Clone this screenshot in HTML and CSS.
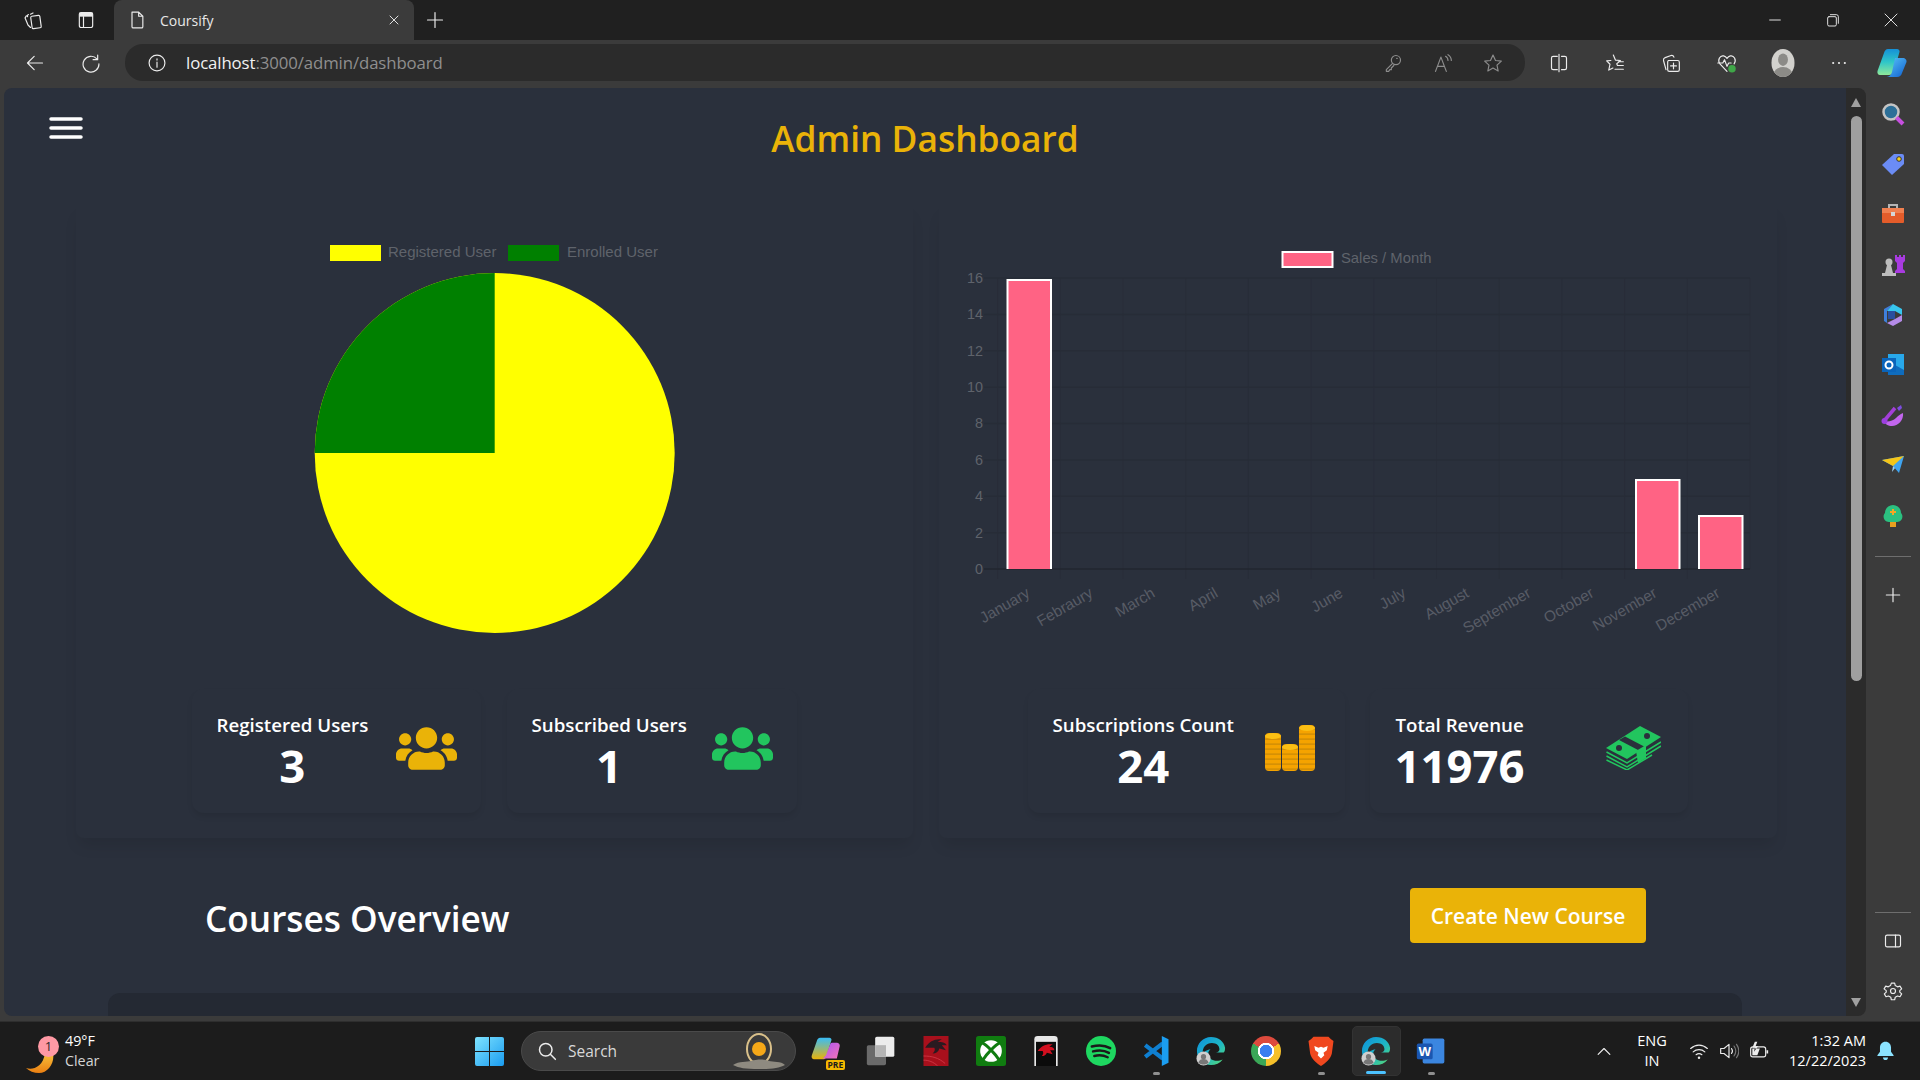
FILE: index.html
```html
<!DOCTYPE html>
<html lang="en">
<head>
  <meta charset="UTF-8" />
  <title>Coursify</title>
  <link rel="stylesheet" href="styles.css">
</head>
<body>
<svg class="svg-defs" aria-hidden="true">
  <defs>
    <linearGradient id="edgeGrad" x1="0" y1="0" x2="1" y2="1"><stop offset="0" stop-color="#0c8fdc"/><stop offset=".55" stop-color="#1fb8c4"/><stop offset="1" stop-color="#5fdc6a"/></linearGradient>
    <linearGradient id="copilotA" x1="0" y1="0" x2="0" y2="1"><stop offset="0" stop-color="#1590d8"/><stop offset=".5" stop-color="#2fc6c8"/><stop offset="1" stop-color="#8fe89a"/></linearGradient>
    <linearGradient id="copilotB" x1="0" y1="0" x2="1" y2="1"><stop offset="0" stop-color="#5cc8fa"/><stop offset="1" stop-color="#0f5fd0"/></linearGradient>
    <linearGradient id="preA" x1="0" y1="0" x2="0" y2="1"><stop offset="0" stop-color="#38bdf8"/><stop offset="1" stop-color="#eab308"/></linearGradient>
    <linearGradient id="preB" x1="0" y1="0" x2="1" y2="1"><stop offset="0" stop-color="#a855f7"/><stop offset="1" stop-color="#f472b6"/></linearGradient>
    <linearGradient id="moonGrad" x1="0" y1="0" x2="0" y2="1"><stop offset="0" stop-color="#f9c23c"/><stop offset="1" stop-color="#ea7f12"/></linearGradient>
    <linearGradient id="winGrad" x1="0" y1="0" x2="1" y2="1"><stop offset="0" stop-color="#7fe3ff"/><stop offset="1" stop-color="#1a9cf0"/></linearGradient>
    <pattern id="coinStripes" width="6" height="5" patternUnits="userSpaceOnUse"><rect width="6" height="5" fill="#f5a300"/><rect y="3.5" width="6" height="1.2" fill="#c98a06"/></pattern>
    <symbol id="edgeIcon" viewBox="0 0 32 32">
      <path fill="url(#edgeGrad)" d="M16 1C7.5 1 1 8 1 16c0 8.500 6.500 15 15 15 5 0 9.500-2.200 12.500-6-6 3-15.500 1.500-15.500-6 0-2 1-3.500 2.500-4.500-4 0-7.500 2.500-8.500 6C6.500 11.500 11 7.500 17 7.500c5 0 8 3 8 6.500 0 2-1.500 3.500-4 3.500h8.500C31 16.500 31 14 31 12.500 30 6 24 1 16 1z"/>
      <circle cx="8" cy="24" r="7.500" fill="#cfcfcf"/><circle cx="8" cy="22" r="2.800" fill="#777"/><path fill="#777" d="M2.500 28.500c1-3 3-4 5.500-4s4.500 1 5.500 4c-3 2.500-8 2.500-11 0z"/>
    </symbol>
  </defs>
</svg>

<div class="app">
  <!-- browser tab strip -->
  <div class="tabstrip">
    <div class="strip-cell"><svg class="ico" viewBox="0 0 24 24"><rect x="10" y="7" width="11" height="15" rx="1.500" transform="rotate(-8 15 14)"/><path d="M9 5 12 3.500M5.500 8c-.500-1 0-2 1-2.500M4 7 2.500 9.500 6 18l3 3"/></svg></div>
    <div class="strip-cell"><svg class="ico" viewBox="0 0 24 24"><rect x="4" y="3" width="16" height="18" rx="2.500"/><rect class="ico-solid" x="4" y="3" width="16" height="5"/><path d="M9 8v13"/></svg></div>
    <div class="tab">
      <svg class="ico tab-file" viewBox="0 0 24 24"><path d="M6 2.500h8l5 5V20a1.500 1.500 0 0 1-1.500 1.500h-10A1.500 1.500 0 0 1 6 20zM14 2.500v5h5"/></svg>
      <span class="tab-title">Coursify</span>
      <svg class="ico tab-close" viewBox="0 0 24 24"><path d="M6 6l12 12M18 6 6 18"/></svg>
    </div>
    <div class="strip-plus"><svg class="ico" viewBox="0 0 24 24"><path d="M12 3v18M3 12h18"/></svg></div>
    <div class="window-controls">
      <div class="window-btn"><svg class="ico small" viewBox="0 0 24 24"><path d="M4 12h16"/></svg></div>
      <div class="window-btn"><svg class="ico small" viewBox="0 0 24 24"><rect x="4" y="7" width="13" height="14" rx="2"/><path d="M8 4h9a3 3 0 0 1 3 3v10"/></svg></div>
      <div class="window-btn"><svg class="ico small" viewBox="0 0 24 24"><path d="M3 3l18 18M21 3 3 21"/></svg></div>
    </div>
  </div>

  <!-- browser toolbar -->
  <div class="toolbar">
    <div class="tool-cell first"><svg class="ico" viewBox="0 0 24 24"><path d="M21 12H3M11 4l-8 8 8 8"/></svg></div>
    <div class="tool-cell"><svg class="ico" viewBox="0 0 24 24"><path d="M19 7a9.500 9.500 0 1 0 2.500 6M20 2.500V8h-5.500"/></svg></div>
    <div class="address">
      <svg class="ico address-info" viewBox="0 0 24 24"><circle cx="12" cy="12" r="9.500"/><path d="M12 11v6M12 7v1.500"/></svg>
      <span class="url"><b>localhost</b>:3000/admin/dashboard</span>
      <div class="address-actions">
        <div class="address-cell"><svg class="ico dim" viewBox="0 0 24 24"><circle cx="15.500" cy="8.500" r="5.500"/><path d="M11.500 12.500 4 20v2h3l1-2h2v-2l3-3M16.500 6.500h.5"/></svg></div>
        <div class="address-cell"><svg class="ico dim" viewBox="0 0 24 24"><path d="M3 22 9.500 5 16 22M5.500 16h8M15 4c2 1 3 3 3 5M18 2c2.500 1.500 4 4 4 7"/></svg></div>
        <div class="address-cell"><svg class="ico dim" viewBox="0 0 24 24"><path d="M12 2.500l3 6.500 7 .800-5.200 4.800 1.400 7L12 18l-6.200 3.600 1.400-7L2 9.800 9 9z"/></svg></div>
      </div>
    </div>
    <div class="tool-cell gap"><svg class="ico" viewBox="0 0 24 24"><path d="M10 4H5a2 2 0 0 0-2 2v12a2 2 0 0 0 2 2h5M15 4h4a2 2 0 0 1 2 2v12a2 2 0 0 1-2 2h-4M12 1.500v21"/></svg></div>
    <div class="tool-cell"><svg class="ico" viewBox="0 0 24 24"><path d="M10 2.500l2.500 6 6 .500-4.500 4 1 2M7 9l-5 .500 4 4-1.500 7 5-2.500M16 10.500h6M15 15h7M12 19.500h10"/></svg></div>
    <div class="tool-cell"><svg class="ico" viewBox="0 0 24 24"><path d="M6 20 3 9c-.500-2 1-3 2-3.500L12 3c2-.500 3 .500 3.500 2M9 9h11a2 2 0 0 1 2 2v9a2 2 0 0 1-2 2H10a2 2 0 0 1-2-2v-9a2 2 0 0 1 1-2zM15 12v7M11.500 15.500h7"/></svg></div>
    <div class="tool-cell"><svg class="ico" viewBox="0 0 24 24"><path d="M12 22 3.500 13C0 8 4 2.500 8 3.500c2 .500 3 1.500 4 3 1-1.500 2-2.500 4-3 4-1 8 4.500 4.500 9.500M1 12h6l2-4 3 8 2-4h3"/><circle class="health-dot" cx="18" cy="19" r="4.500"/></svg></div>
    <div class="tool-cell"><svg class="avatar" viewBox="0 0 28 34"><defs><clipPath id="avatarClip"><ellipse cx="14" cy="17" rx="14" ry="17"/></clipPath></defs><ellipse cx="14" cy="17" rx="14" ry="17" fill="#d2d1cd"/><g clip-path="url(#avatarClip)" fill="#8c8b87"><ellipse cx="14" cy="13" rx="6" ry="7.500"/><ellipse cx="14" cy="32" rx="12" ry="10"/></g></svg></div>
    <div class="tool-cell"><svg class="ico" viewBox="0 0 24 24"><circle class="ico-fill" cx="5" cy="12" r="1.300"/><circle class="ico-fill" cx="12" cy="12" r="1.300"/><circle class="ico-fill" cx="19" cy="12" r="1.300"/></svg></div>
    <div class="tool-cell last"><svg class="copilot" viewBox="0 0 30 30"><path fill="url(#copilotA)" d="M11 1h9c2 0 3 2 2.500 3L17 23c-.500 2-3 4-5 4H3c-2 0-3-2-2.500-4L7 5c.500-2 2-4 4-4z"/><path fill="url(#copilotB)" d="M18 10h8c2 0 4 2 3.500 4L25 25c-.500 2-2 4-5 4H9c2 0 5-1 6-5l3-14z"/></svg></div>
  </div>

  <div class="browser-body">
    <!-- the page itself -->
    <main class="viewport">
      <svg class="menu-toggle" viewBox="0 0 34 22"><path d="M2 2h30M2 11h30M2 20h30"/></svg>
      <h1 class="page-title">Admin Dashboard</h1>

      <div class="stats-grid">
        <section class="panel">
          <svg class="chart" viewBox="0 0 837 484">
            <rect class="swatch-yellow" x="254" y="40" width="51" height="16"/>
            <text class="chart-text legend" x="312" y="52">Registered User</text>
            <rect class="swatch-green" x="432" y="40" width="51" height="16"/>
            <text class="chart-text legend" x="491" y="52">Enrolled User</text>
            <circle class="swatch-yellow" cx="418.700" cy="248" r="180"/>
            <path class="swatch-green" d="M418.700 248V68A180 180 0 0 0 238.700 248z"/>
          </svg>
          <div class="cards">
            <div class="card">
              <div class="card-text"><h3>Registered Users</h3><p>3</p></div>
              <svg class="users-icon yellow" viewBox="0 32 640 448"><path d="M96 224c35.300 0 64-28.700 64-64s-28.700-64-64-64-64 28.700-64 64 28.700 64 64 64zm448 0c35.300 0 64-28.700 64-64s-28.700-64-64-64-64 28.700-64 64 28.700 64 64 64zm32 32h-64c-17.600 0-33.500 7.100-45.100 18.600 40.300 22.100 68.900 62 75.100 109.400h66c17.700 0 32-14.300 32-32v-32c0-35.300-28.700-64-64-64zm-256 0c61.900 0 112-50.100 112-112S381.900 32 320 32 208 82.100 208 144s50.100 112 112 112zm76.800 32h-8.300c-20.800 10-43.900 16-68.500 16s-47.600-6-68.500-16h-8.300C179.600 288 128 339.600 128 403.200V432c0 26.500 21.500 48 48 48h288c26.500 0 48-21.500 48-48v-28.800c0-63.600-51.600-115.200-115.200-115.200zm-223.700-13.400C161.500 263.100 145.600 256 128 256H64c-35.300 0-64 28.700-64 64v32c0 17.700 14.300 32 32 32h65.900c6.300-47.400 34.900-87.300 75.200-109.400z"/></svg>
            </div>
            <div class="card">
              <div class="card-text"><h3>Subscribed Users</h3><p>1</p></div>
              <svg class="users-icon green" viewBox="0 32 640 448"><path d="M96 224c35.300 0 64-28.700 64-64s-28.700-64-64-64-64 28.700-64 64 28.700 64 64 64zm448 0c35.300 0 64-28.700 64-64s-28.700-64-64-64-64 28.700-64 64 28.700 64 64 64zm32 32h-64c-17.600 0-33.500 7.100-45.100 18.600 40.300 22.100 68.900 62 75.100 109.400h66c17.700 0 32-14.300 32-32v-32c0-35.300-28.700-64-64-64zm-256 0c61.900 0 112-50.100 112-112S381.900 32 320 32 208 82.100 208 144s50.100 112 112 112zm76.800 32h-8.300c-20.800 10-43.900 16-68.500 16s-47.600-6-68.500-16h-8.300C179.600 288 128 339.600 128 403.200V432c0 26.500 21.500 48 48 48h288c26.500 0 48-21.500 48-48v-28.800c0-63.600-51.600-115.200-115.200-115.200zm-223.700-13.400C161.500 263.100 145.600 256 128 256H64c-35.300 0-64 28.700-64 64v32c0 17.700 14.300 32 32 32h65.900c6.300-47.400 34.900-87.300 75.200-109.400z"/></svg>
            </div>
          </div>
        </section>

        <section class="panel">
          <svg class="chart" viewBox="0 0 838 484">
            <rect class="bar" x="343.500" y="47" width="50" height="15"/>
            <text class="chart-text bar-legend" x="402" y="58">Sales / Month</text>
            <path class="grid-line" d="M58.600 73V374M121.300 73V374M184 73V374M246.700 73V374M309.400 73V374M372.100 73V374M434.800 73V374M497.500 73V374M560.200 73V374M622.900 73V374M685.600 73V374M748.300 73V374M811 73V364"/>
            <path class="grid-line strong" d="M45 73H811M45 109.400H811M45 145.800H811M45 182.200H811M45 218.500H811M45 254.900H811M45 291.300H811M45 327.700H811"/>
            <path class="grid-line zero" d="M45 364H811"/>
            <g class="chart-text bar-text ticks">
              <text x="44" y="78">16</text><text x="44" y="114">14</text><text x="44" y="151">12</text><text x="44" y="187">10</text><text x="44" y="223">8</text><text x="44" y="260">6</text><text x="44" y="296">4</text><text x="44" y="333">2</text><text x="44" y="369">0</text>
            </g>
            <path class="bar" d="M68.500 364V75H112V364"/>
            <path class="bar" d="M697 364V275H740.500V364"/>
            <path class="bar" d="M760 364V311H803.500V364"/>
            <g class="chart-text month-text">
              <text transform="rotate(-30 92 391)" x="92" y="391">January</text>
              <text transform="rotate(-30 155 391)" x="155" y="391">Febraury</text>
              <text transform="rotate(-30 217 391)" x="217" y="391">March</text>
              <text transform="rotate(-30 280 391)" x="280" y="391">April</text>
              <text transform="rotate(-30 343 391)" x="343" y="391">May</text>
              <text transform="rotate(-30 405 391)" x="405" y="391">June</text>
              <text transform="rotate(-30 468 391)" x="468" y="391">July</text>
              <text transform="rotate(-30 531 391)" x="531" y="391">August</text>
              <text transform="rotate(-30 593 391)" x="593" y="391">September</text>
              <text transform="rotate(-30 656 391)" x="656" y="391">October</text>
              <text transform="rotate(-30 719 391)" x="719" y="391">November</text>
              <text transform="rotate(-30 782 391)" x="782" y="391">December</text>
            </g>
          </svg>
          <div class="cards wide">
            <div class="card">
              <div class="card-text"><h3>Subscriptions Count</h3><p>24</p></div>
              <svg class="coins-icon" viewBox="0 0 50 46">
                <rect x="0" y="8" width="16" height="38" rx="4" fill="url(#coinStripes)"/><ellipse cx="8" cy="11" rx="8" ry="3" fill="#fbbf14"/>
                <rect x="17" y="19" width="16" height="27" rx="4" fill="url(#coinStripes)"/><ellipse cx="25" cy="22" rx="8" ry="3" fill="#fbbf14"/>
                <rect x="34" y="0" width="16" height="46" rx="4" fill="url(#coinStripes)"/><ellipse cx="42" cy="3" rx="8" ry="3" fill="#fbbf14"/>
              </svg>
            </div>
            <div class="card">
              <div class="card-text"><h3>Total Revenue</h3><p>11976</p></div>
              <svg class="money-icon" viewBox="0 0 55 44">
                <path class="money-lines" d="M.500 26 21 37 55 16M.500 30 21 41 55 20M.500 34 21 44 46 29"/>
                <path class="money-bill" d="M0 22 34 0 55 11 21 33z"/>
                <path class="money-band" d="M13 14 19 10.500 40 21.500 34 25z"/>
                <circle class="money-band" cx="13" cy="22" r="3"/><circle class="money-band" cx="41" cy="10" r="3"/>
                <path class="money-bill" d="M30 25 40 19v13L32 37z"/>
              </svg>
            </div>
          </div>
        </section>
      </div>

      <div class="courses-head">
        <h2>Courses Overview</h2>
        <button class="create-btn">Create New Course</button>
      </div>
      <div class="courses-table"></div>
    </main>

    <div class="scrollbar">
      <span class="scroll-up"></span>
      <span class="scroll-thumb"></span>
      <span class="scroll-down"></span>
    </div>

    <!-- edge sidebar -->
    <aside class="sidebar">
      <div class="side-cell"><svg class="side-ico" viewBox="0 0 24 24"><circle cx="10" cy="10" r="7.500" fill="#2c6f98" stroke="#c4c4c4" stroke-width="2.500"/><path d="M15.500 15.500 22 22" stroke="#c74fe0" stroke-width="4"/></svg></div>
      <div class="side-cell"><svg class="side-ico" viewBox="0 0 24 24"><path fill="#6b8cf5" d="M13 2h8a2 2 0 0 1 2 2v8L11 23 1 13z"/><circle cx="18" cy="7" r="2.300" fill="#f6d21f" stroke="#333"/></svg></div>
      <div class="side-cell"><svg class="side-ico" viewBox="0 0 24 24"><path d="M8 6V3h8v3" fill="none" stroke="#b5b5b5" stroke-width="2"/><path fill="#e45c2a" d="M1 6h22v14a1 1 0 0 1-1 1H2a1 1 0 0 1-1-1z"/><path fill="#f08050" d="M1 6h22v5H1z"/><rect x="10" y="10" width="4" height="4" fill="#d6d6d6"/></svg></div>
      <div class="side-cell"><svg class="side-ico" viewBox="0 0 24 24"><circle cx="8" cy="9" r="3.500" fill="#bdbdbd"/><path fill="#bdbdbd" d="M6 12h4l2 8H4zM1 20h14v3H1z"/><path fill="#a83be0" d="M14 2h2v2h2V2h2v2h2V2h2v6l-2 2v6l2 2v2H14v-2l2-2v-6l-2-2z"/></svg></div>
      <div class="side-cell"><svg class="side-ico" viewBox="0 0 24 24"><path fill="#3f7fdc" d="M12 1 3 6v12l3 2V8z"/><path fill="#37c6ee" d="M12 1l9 5v6l-7-4-8 0z"/><path fill="#b58be8" d="M21 12v6l-9 5-6-3 8-4z"/><path fill="#2a4f9e" d="M7 8h7v8H7z"/></svg></div>
      <div class="side-cell"><svg class="side-ico" viewBox="0 0 24 24"><path fill="#28a8ea" d="M7 1h16v21H7z"/><path fill="#0f6cbd" d="M14 12l9 5v5H7v-8z"/><rect x="1" y="5" width="14" height="14" fill="#0a64ba"/><circle cx="8" cy="12" r="3.500" fill="none" stroke="#fff" stroke-width="2"/></svg></div>
      <div class="side-cell"><svg class="side-ico" viewBox="0 0 24 24"><path fill="#c266ee" d="M22 10c1 7-5 13-11 13-4 0-7-2-8-5 4 1 9 0 12-3 2-2 4-4 7-5z"/><path stroke="#a33fd8" stroke-width="3.500" d="M3 18 14 5"/><circle cx="3.500" cy="18" r="3" fill="#9c3fe0"/><path fill="#7d4de0" d="M16 5l4-3 1 3-3 3z"/></svg></div>
      <div class="side-cell"><svg class="side-ico" viewBox="0 0 24 24"><path fill="#3fa4f0" d="M1 7 23 3 18 20 12 13z"/><path fill="#f5c518" d="M1 7 23 3 12 13z"/><path fill="#9ed4fa" d="M12 13l-1 6 3-4z"/></svg></div>
      <div class="side-cell"><svg class="side-ico" viewBox="0 0 24 24"><path fill="#e8a020" d="M9 17h6v6H9z"/><path fill="#2bc080" d="M12 1c5 0 8 4 8 8 3 3 1 9-4 9H8c-5 0-7-6-4-9 0-4 3-8 8-8z"/><path fill="#f5a623" d="M11 5h2v2h2v2h-2v2h-2V9H9V7h2z"/></svg></div>
      <span class="side-sep"></span>
      <div class="side-plus"><svg class="ico" viewBox="0 0 24 24"><path d="M12 4v16M4 12h16"/></svg></div>
      <div class="side-bottom">
        <span class="side-sep"></span>
        <div class="side-cell"><svg class="ico" viewBox="0 0 24 24"><rect x="3" y="5" width="18" height="14" rx="2"/><path d="M15 5v14"/></svg></div>
        <div class="side-cell"><svg class="ico" viewBox="0 0 24 24"><circle cx="12" cy="12" r="3"/><path d="M10 2.500h4l.700 3 2.700 1.500 3-.900 2 3.400-2.300 2.100v1.800l2.300 2.100-2 3.400-3-.900-2.700 1.500-.700 3h-4l-.700-3-2.700-1.500-3 .900-2-3.400 2.300-2.100v-1.800L1.300 9.500l2-3.400 3 .900 2.700-1.500z"/></svg></div>
      </div>
    </aside>
  </div>

  <!-- windows taskbar -->
  <footer class="taskbar">
    <div class="weather">
      <div class="moon">
        <svg class="moon-svg" viewBox="0 0 28 20"><path fill="url(#moonGrad)" d="M0 15c6 2 17 0 19-15h8c2 10-5 20-14 20-5 0-10-2-13-5z"/></svg>
        <span class="moon-badge">1</span>
      </div>
      <div class="weather-text"><span>49°F</span><span>Clear</span></div>
    </div>
    <div class="win-cell"><svg class="win-logo" viewBox="0 0 29 29"><path fill="url(#winGrad)" d="M0 2a2 2 0 0 1 2-2h12v14H0zM15 0h12a2 2 0 0 1 2 2v12H15zM0 15h14v14H2a2 2 0 0 1-2-2zM15 15h14v12a2 2 0 0 1-2 2H15z"/></svg></div>
    <div class="search">
      <svg class="ico search-ico" viewBox="0 0 24 24"><circle cx="10.500" cy="10.500" r="7.500"/><path d="M16 16l6 6"/></svg>
      <span>Search</span>
      <svg class="search-art" viewBox="0 0 56 42"><ellipse cx="28" cy="19" rx="12" ry="15" fill="#3a3a3a" stroke="#d9c08a" stroke-width="2"/><circle cx="28" cy="19" r="7" fill="#f5a818"/><path fill="#8e8a80" d="M2 35c6-4 14-3 18-4 6-2 14-2 18 0 4 1 12 0 16 4-6 3-12 4-26 4S8 38 2 35z"/></svg>
    </div>
    <div class="apps">
      <div class="app-cell"><svg class="app-ico" viewBox="0 0 36 36"><path fill="url(#preA)" d="M11 2h11c2 0 3 2 2.500 3L18 26c-.500 1-2 2-4 2H4c-2 0-4-2-3-5L7 6c.500-2 2-4 4-4z"/><path fill="url(#preB)" d="M25 8h6c2 0 4 2 3.500 4L31 27H14l4-4 5-13c.500-1 1-2 2-2z"/></svg><span class="pre-tag">PRE</span></div>
      <div class="app-cell"><svg class="app-ico" viewBox="0 0 36 36"><rect x="1" y="11" width="23" height="24" rx="2" fill="#6a6a6a"/><rect x="11" y="1" width="23" height="24" rx="2" fill="#ececec"/><rect x="11" y="11" width="13" height="14" fill="#b5b5b5"/></svg></div>
      <div class="app-cell"><svg class="app-ico big" viewBox="0 0 30 36"><rect width="30" height="36" fill="#a8101c"/><path fill="#2a1a20" d="M2 14c5-8 12-11 20-10l-5 3c5 0 9 1 11 4l-6 0 5 6-8-2c-1 4-4 6-8 6 3-3 3-5 2-7-3 0-7 0-11 0z"/><path stroke="#d13a48" fill="none" d="M0 24c10 0 18 2 26 9M0 29c6 0 12 2 17 7"/></svg></div>
      <div class="app-cell"><svg class="app-ico big" viewBox="0 0 36 36"><rect width="36" height="36" rx="3" fill="#107c10"/><circle cx="18" cy="18" r="13" fill="#fff"/><path d="M7 8c6 3 16 13 21 21M29 8C23 11 13 21 8 29" stroke="#107c10" stroke-width="3.500" fill="none"/></svg></div>
      <div class="app-cell"><svg class="app-ico big" viewBox="0 0 28 36"><path fill="#e8e8e8" d="M0 36V4a4 4 0 0 1 4-4h20a4 4 0 0 1 4 4v32z"/><rect x="2" y="7" width="24" height="29" fill="#0b0b0b"/><path fill="#d10f1f" d="M4 18c4-6 10-9 18-8l-4 3c4 0 6 2 6 4l-5 0 3 5-7-2c-1 3-3 4-6 4 2-2 2-4 1-6z"/></svg></div>
      <div class="app-cell"><svg class="app-ico big" viewBox="0 0 36 36"><circle cx="18" cy="18" r="18" fill="#1ed760"/><path d="M7 12.500c8-2 16-1.500 22 2M8.500 18.500c7-2 14-1.200 19 1.700M10 24c6-1.500 11-1 16 1.500" stroke="#1b1b1b" stroke-width="3" stroke-linecap="round" fill="none"/></svg></div>
      <div class="app-cell"><svg class="app-ico big" viewBox="0 0 32 36"><path d="M3 11 24 27M3 25 24 9" stroke="#0f7fd0" stroke-width="5" fill="none"/><path fill="#1b9df0" d="M23 0l8 4v28l-8 4z"/></svg><span class="run-dot"></span></div>
      <div class="app-cell"><svg class="app-ico big"><use href="#edgeIcon"/></svg></div>
      <div class="app-cell"><div class="chrome-ico"></div></div>
      <div class="app-cell"><svg class="app-ico big" viewBox="0 0 30 36"><path fill="#f0481f" d="M6 1h18l3 3 3 2-2 15c-1 6-8 12-13 15C10 33 3 27 2 21L0 6l3-2z"/><path fill="#fff" d="M7 12l5 2 3-1 3 1 5-2-1 5-4 3 1 3-4 4-4-4 1-3-4-3z"/></svg><span class="run-dot"></span></div>
      <div class="app-cell active"><svg class="app-ico big"><use href="#edgeIcon"/></svg><span class="run-dot current"></span></div>
      <div class="app-cell"><svg class="app-ico big" viewBox="0 0 36 36"><rect x="8" y="3" width="26" height="30" rx="2" fill="#3b86e0"/><rect x="1" y="9" width="19" height="19" rx="2" fill="#1a56b0"/><text class="word-w" x="10.500" y="24">W</text></svg><span class="run-dot"></span></div>
    </div>
    <div class="tray">
      <div class="tray-chevron"><svg class="ico" viewBox="0 0 24 24"><path d="M5 16l7-7 7 7"/></svg></div>
      <div class="tray-lang"><span>ENG</span><span>IN</span></div>
      <div class="tray-icon wifi"><svg class="ico" viewBox="0 0 24 24"><path d="M2 9c6-5.500 14-5.500 20 0M5 13c4-3.500 10-3.500 14 0M8.500 16.500c2-1.500 5-1.500 7 0"/><circle class="ico-fill" cx="12" cy="20" r="1.500"/></svg></div>
      <div class="tray-icon"><svg class="ico" viewBox="0 0 24 24"><path d="M2 9h4l6-5v16l-6-5H2zM15 9c1.500 2 1.500 4 0 6"/><path class="dim" d="M18 6c2.500 3.500 2.500 8.500 0 12M21 4c3.500 5 3.500 11 0 16"/></svg></div>
      <div class="tray-icon"><svg class="ico" viewBox="0 0 24 24"><rect x="2" y="7" width="18" height="12" rx="2.500"/><path class="ico-fill" d="M4 9h9l-3 8H4zM21 11h2v4h-2zM7 1 4 8h3l-1 5 5-7H8l2-5z"/></svg></div>
      <div class="tray-clock"><span>1:32 AM</span><span>12/22/2023</span></div>
      <div class="tray-bell"><svg class="bell" viewBox="0 0 20 22"><path d="M10 0c4 0 6.500 3 6.500 7v5l3 4v1H.500v-1l3-4V7c0-4 2.500-7 6.500-7zM7 18.500h6c0 2-1.500 3-3 3s-3-1-3-3z"/></svg></div>
    </div>
  </footer>
</div>
</body>
</html>
```

FILE: styles.css
```css
* {
  box-sizing: border-box;
}

body {
  margin: 0;
  font-family: "Open Sans", "Noto Sans", sans-serif;
  background: #3b3b3b;
  color: #fff;
  overflow: hidden;
}

.svg-defs {
  position: absolute;
  width: 0;
  height: 0;
}

.app {
  display: flex;
  flex-direction: column;
  width: 1920px;
  height: 1080px;
}

/* line icons used all over the browser chrome */
.ico {
  width: 20px;
  height: 20px;
  fill: none;
  stroke: #ececec;
  stroke-width: 1.4;
  stroke-linejoin: round;
  stroke-linecap: round;
}

.ico.small {
  width: 16px;
  height: 16px;
}

.ico.dim {
  stroke: #8d8d8d;
}

.ico .dim {
  stroke: #777;
}

.ico-solid,
.ico-fill {
  fill: #ececec;
  stroke: none;
}

/* tab strip */
.tabstrip {
  display: flex;
  height: 40px;
  padding-left: 6px;
  background: #202020;
}

.strip-cell {
  display: flex;
  align-items: center;
  justify-content: center;
  width: 53px;
}

.tab {
  display: flex;
  align-items: center;
  width: 300px;
  margin-left: 2px;
  padding: 0 12px 0 13px;
  background: #3b3b3b;
  border-radius: 8px 8px 0 0;
}

.tab-file {
  width: 20px;
  height: 22px;
}

.tab-title {
  margin-left: 13px;
  font-size: 14px;
  color: #e8e8e8;
}

.tab-close {
  width: 16px;
  height: 16px;
  margin-left: auto;
}

.strip-plus {
  display: flex;
  align-items: center;
  justify-content: center;
  width: 42px;
}

.window-controls {
  display: flex;
  margin-left: auto;
}

.window-btn {
  display: flex;
  align-items: center;
  justify-content: center;
  width: 58px;
}

/* toolbar */
.toolbar {
  display: flex;
  align-items: center;
  height: 48px;
  padding-bottom: 3px;
  background: #3b3b3b;
}

.tool-cell {
  display: flex;
  align-items: center;
  justify-content: center;
  flex: none;
  width: 56px;
}

.tool-cell.first {
  width: 63px;
  padding-left: 6px;
}

.tool-cell.last {
  width: 50px;
}

.tool-cell.gap {
  margin-left: 6px;
}

.avatar {
  width: 28px;
  height: 28px;
}

.copilot {
  width: 30px;
  height: 30px;
}

.health-dot {
  fill: #3fa648;
  stroke: none;
}

.address {
  display: flex;
  align-items: center;
  flex: none;
  width: 1400px;
  height: 37px;
  margin-left: 6px;
  padding-left: 22px;
  background: #2b2b2b;
  border-radius: 18px;
}

.address-info {
  flex: none;
}

.url {
  margin-left: 19px;
  font-size: 16.8px;
  letter-spacing: -0.1px;
  color: #8f8f8f;
}

.url b {
  font-weight: 400;
  color: #f2f2f2;
}

.address-actions {
  display: flex;
  margin-left: auto;
  padding-right: 7px;
}

.address-cell {
  display: flex;
  align-items: center;
  justify-content: center;
  width: 50px;
}

/* middle part: page, scrollbar, sidebar */
.browser-body {
  display: flex;
  height: 933px;
}

.viewport {
  position: relative;
  flex: none;
  width: 1842px;
  height: 928px;
  margin-left: 4px;
  background: #2a303c;
  border-radius: 8px 0 0 8px;
  overflow: hidden;
}

.menu-toggle {
  position: absolute;
  top: 29px;
  left: 45px;
  width: 34px;
  height: 22px;
  fill: none;
  stroke: #fff;
  stroke-width: 3.5;
  stroke-linecap: round;
}

.page-title {
  margin: 0;
  height: 117px;
  padding-top: 26px;
  text-align: center;
  font-size: 35.3px;
  line-height: 48px;
  font-weight: 600;
  color: #eab308;
}

.stats-grid {
  display: grid;
  grid-template-columns: 837px 838px;
  column-gap: 26px;
  justify-content: center;
  padding-left: 2px;
}

.panel {
  height: 633px;
  border-radius: 8px;
  box-shadow: 0 10px 15px -3px rgba(0, 0, 0, 0.1);
}

.chart {
  display: block;
  width: 100%;
  height: 484px;
}

.chart-text {
  font-family: "Liberation Sans", Arial, sans-serif;
  fill: #5f636b;
}

.legend {
  font-size: 15px;
}

.bar-legend {
  font-size: 14.8px;
}

.bar-text {
  font-size: 14.4px;
}

.ticks {
  text-anchor: end;
}

.month-text {
  font-size: 15.4px;
  text-anchor: end;
  fill: #585c66;
}

.swatch-yellow {
  fill: #ffff00;
}

.swatch-green {
  fill: #008000;
}

.bar {
  fill: #ff6384;
  stroke: #fff;
  stroke-width: 2;
}

.grid-line {
  fill: none;
  stroke: #282d39;
  stroke-width: 1;
}

.grid-line.strong {
  stroke: #272c37;
  stroke-width: 1.5;
}

.grid-line.zero {
  stroke: #22262f;
  stroke-width: 1.5;
}

.cards {
  display: grid;
  grid-template-columns: 289px 290px;
  column-gap: 26px;
  justify-content: center;
}

.cards.wide {
  grid-template-columns: 317px 318px;
  column-gap: 25px;
}

.card {
  display: flex;
  align-items: center;
  justify-content: space-between;
  height: 124px;
  padding: 0 24px 0 25px;
  border-radius: 12px;
  box-shadow: 0 4px 6px -1px rgba(0, 0, 0, 0.1);
}

.card-text {
  text-align: center;
}

.card-text h3 {
  margin: 2px 0 0;
  font-size: 18.7px;
  line-height: 26px;
  font-weight: 600;
  white-space: nowrap;
}

.card-text p {
  margin: 3px 0 4px;
  font-size: 45.5px;
  line-height: 48px;
  font-weight: 700;
}

.users-icon {
  width: 61px;
  height: 43px;
  margin-bottom: 6px;
}

.yellow {
  fill: #eab308;
}

.green {
  fill: #22c55e;
}

.coins-icon {
  width: 50px;
  height: 46px;
  margin: 0 6px 6px 0;
}

.money-icon {
  width: 55px;
  height: 44px;
  margin: 0 3px 6px 0;
}

.money-bill {
  fill: #22c55e;
}

.money-band {
  fill: #2a303c;
}

.money-lines {
  fill: none;
  stroke: #22c55e;
  stroke-width: 1.5;
}

.courses-head {
  display: flex;
  align-items: center;
  justify-content: space-between;
  height: 55px;
  margin-top: 50px;
  padding: 0 200px 0 201px;
}

.courses-head h2 {
  margin: 0;
  padding-top: 4px;
  font-size: 35.2px;
  font-weight: 600;
}

.create-btn {
  width: 236px;
  height: 55px;
  border: 0;
  border-radius: 4px;
  background: #eab308;
  color: #fff;
  font-family: inherit;
  font-size: 21px;
  font-weight: 600;
}

.courses-table {
  height: 300px;
  margin: 50px 104px 0;
  background: #242933;
  border-radius: 12px;
}

/* scrollbar */
.scrollbar {
  display: flex;
  flex-direction: column;
  align-items: center;
  flex: none;
  width: 20px;
  height: 928px;
  padding: 10px 0 9px;
  background: #2b2b2b;
  border-radius: 0 8px 8px 0;
}

.scroll-up,
.scroll-down {
  width: 0;
  height: 0;
  border-left: 5.5px solid transparent;
  border-right: 5.5px solid transparent;
}

.scroll-up {
  border-bottom: 9px solid #a0a0a0;
}

.scroll-down {
  margin-top: auto;
  border-top: 9px solid #a0a0a0;
}

.scroll-thumb {
  width: 11px;
  height: 565px;
  margin-top: 9px;
  background: #9f9f9f;
  border-radius: 6px;
}

/* right sidebar */
.sidebar {
  display: flex;
  flex-direction: column;
  align-items: center;
  flex: 1;
  height: 928px;
  padding-top: 1px;
}

.side-cell {
  display: flex;
  align-items: center;
  justify-content: center;
  flex: none;
  height: 50.2px;
}

.side-ico {
  width: 24px;
  height: 24px;
  fill: none;
}

.side-sep {
  flex: none;
  width: 36px;
  height: 1px;
  margin-top: 15px;
  background: #6e6e6e;
}

.side-plus {
  display: flex;
  align-items: center;
  height: 40px;
  margin-top: 18px;
}

.side-bottom {
  display: flex;
  flex-direction: column;
  align-items: center;
  margin-top: auto;
  padding-bottom: 0;
}

.side-bottom .side-cell:first-of-type {
  margin-top: 3px;
}

/* taskbar */
.taskbar {
  display: flex;
  align-items: center;
  flex: 1;
  background: #1c1c1c;
  border-top: 1px solid #2e2e2e;
}

.weather {
  display: flex;
  align-items: center;
  flex: none;
  width: 462px;
  padding-left: 26px;
}

.moon {
  position: relative;
  width: 28px;
  height: 44px;
}

.moon-svg {
  position: absolute;
  left: 0;
  bottom: 0;
  width: 28px;
  height: 20px;
}

.moon-badge {
  position: absolute;
  top: 7px;
  left: 12px;
  width: 21px;
  height: 21px;
  border-radius: 50%;
  background: #ff99a4;
  color: #2a2a2a;
  font-size: 13px;
  line-height: 21px;
  text-align: center;
}

.weather-text {
  display: flex;
  flex-direction: column;
  margin-left: 11px;
  font-size: 14.3px;
  line-height: 20px;
}

.weather-text span:last-child {
  color: #d5d5d5;
}

.win-cell {
  display: flex;
  align-items: center;
  justify-content: center;
  flex: none;
  width: 55px;
}

.win-logo {
  width: 29px;
  height: 29px;
}

.search {
  display: flex;
  align-items: center;
  flex: none;
  width: 275px;
  height: 40px;
  margin-left: 4px;
  padding-left: 15px;
  background: #3a3a3a;
  border: 1px solid #4a4a4a;
  border-radius: 20px;
  font-size: 15.5px;
  color: #d8d8d8;
}

.search-ico {
  width: 20px;
  height: 20px;
  stroke-width: 1.8;
}

.search span {
  margin-left: 11px;
}

.search-art {
  width: 56px;
  height: 42px;
  margin-left: auto;
  margin-right: 8px;
}

.apps {
  display: flex;
  flex: none;
  margin-left: 2.5px;
}

.app-cell {
  position: relative;
  display: flex;
  align-items: center;
  justify-content: center;
  width: 55px;
  height: 50px;
  border-radius: 5px;
}

.app-cell.active {
  background: #2c2c2c;
  border: 1px solid #333;
  margin: 0 3px;
  width: 49px;
}

.app-ico {
  width: 30px;
  height: 30px;
}

.app-ico.big {
  width: 30px;
  height: 30px;
}

.pre-tag {
  position: absolute;
  bottom: 6px;
  left: 27px;
  padding: 0 2px;
  background: #f5b800;
  border-radius: 2px;
  color: #1c1c1c;
  font-size: 8.5px;
  line-height: 10px;
  font-weight: 700;
}

.chrome-ico {
  width: 30px;
  height: 30px;
  border-radius: 50%;
  background: radial-gradient(circle, #3a7ff0 0 6px, #fff 6.5px 8px, transparent 8.5px), conic-gradient(from 300deg, #dd4a3d 0 120deg, #f6c02a 120deg 240deg, #3aa757 240deg 360deg);
}

.run-dot {
  position: absolute;
  bottom: 1px;
  left: 50%;
  width: 7px;
  height: 3px;
  margin-left: -3.5px;
  background: #8f8f8f;
  border-radius: 2px;
}

.run-dot.current {
  width: 20px;
  margin-left: -10px;
  background: #4cc2ff;
}

.word-w {
  font-family: "Liberation Sans", Arial, sans-serif;
  font-size: 16px;
  font-weight: 700;
  fill: #fff;
  text-anchor: middle;
}

.tray {
  display: flex;
  align-items: center;
  margin-left: auto;
  padding-right: 16px;
  font-size: 14.5px;
}

.tray-chevron {
  display: flex;
  justify-content: center;
  width: 40px;
}

.tray-lang {
  display: flex;
  flex-direction: column;
  align-items: center;
  width: 56px;
  line-height: 20px;
}

.tray-icon {
  display: flex;
  justify-content: center;
  width: 30px;
}

.tray-icon.wifi {
  margin-left: 4px;
}

.tray-clock {
  display: flex;
  flex-direction: column;
  align-items: flex-end;
  width: 93px;
  margin-left: -1px;
  line-height: 20px;
}

.tray-bell {
  display: flex;
  justify-content: center;
  width: 38px;
}

.bell {
  width: 17px;
  height: 20px;
  fill: #8be3ff;
}
```
